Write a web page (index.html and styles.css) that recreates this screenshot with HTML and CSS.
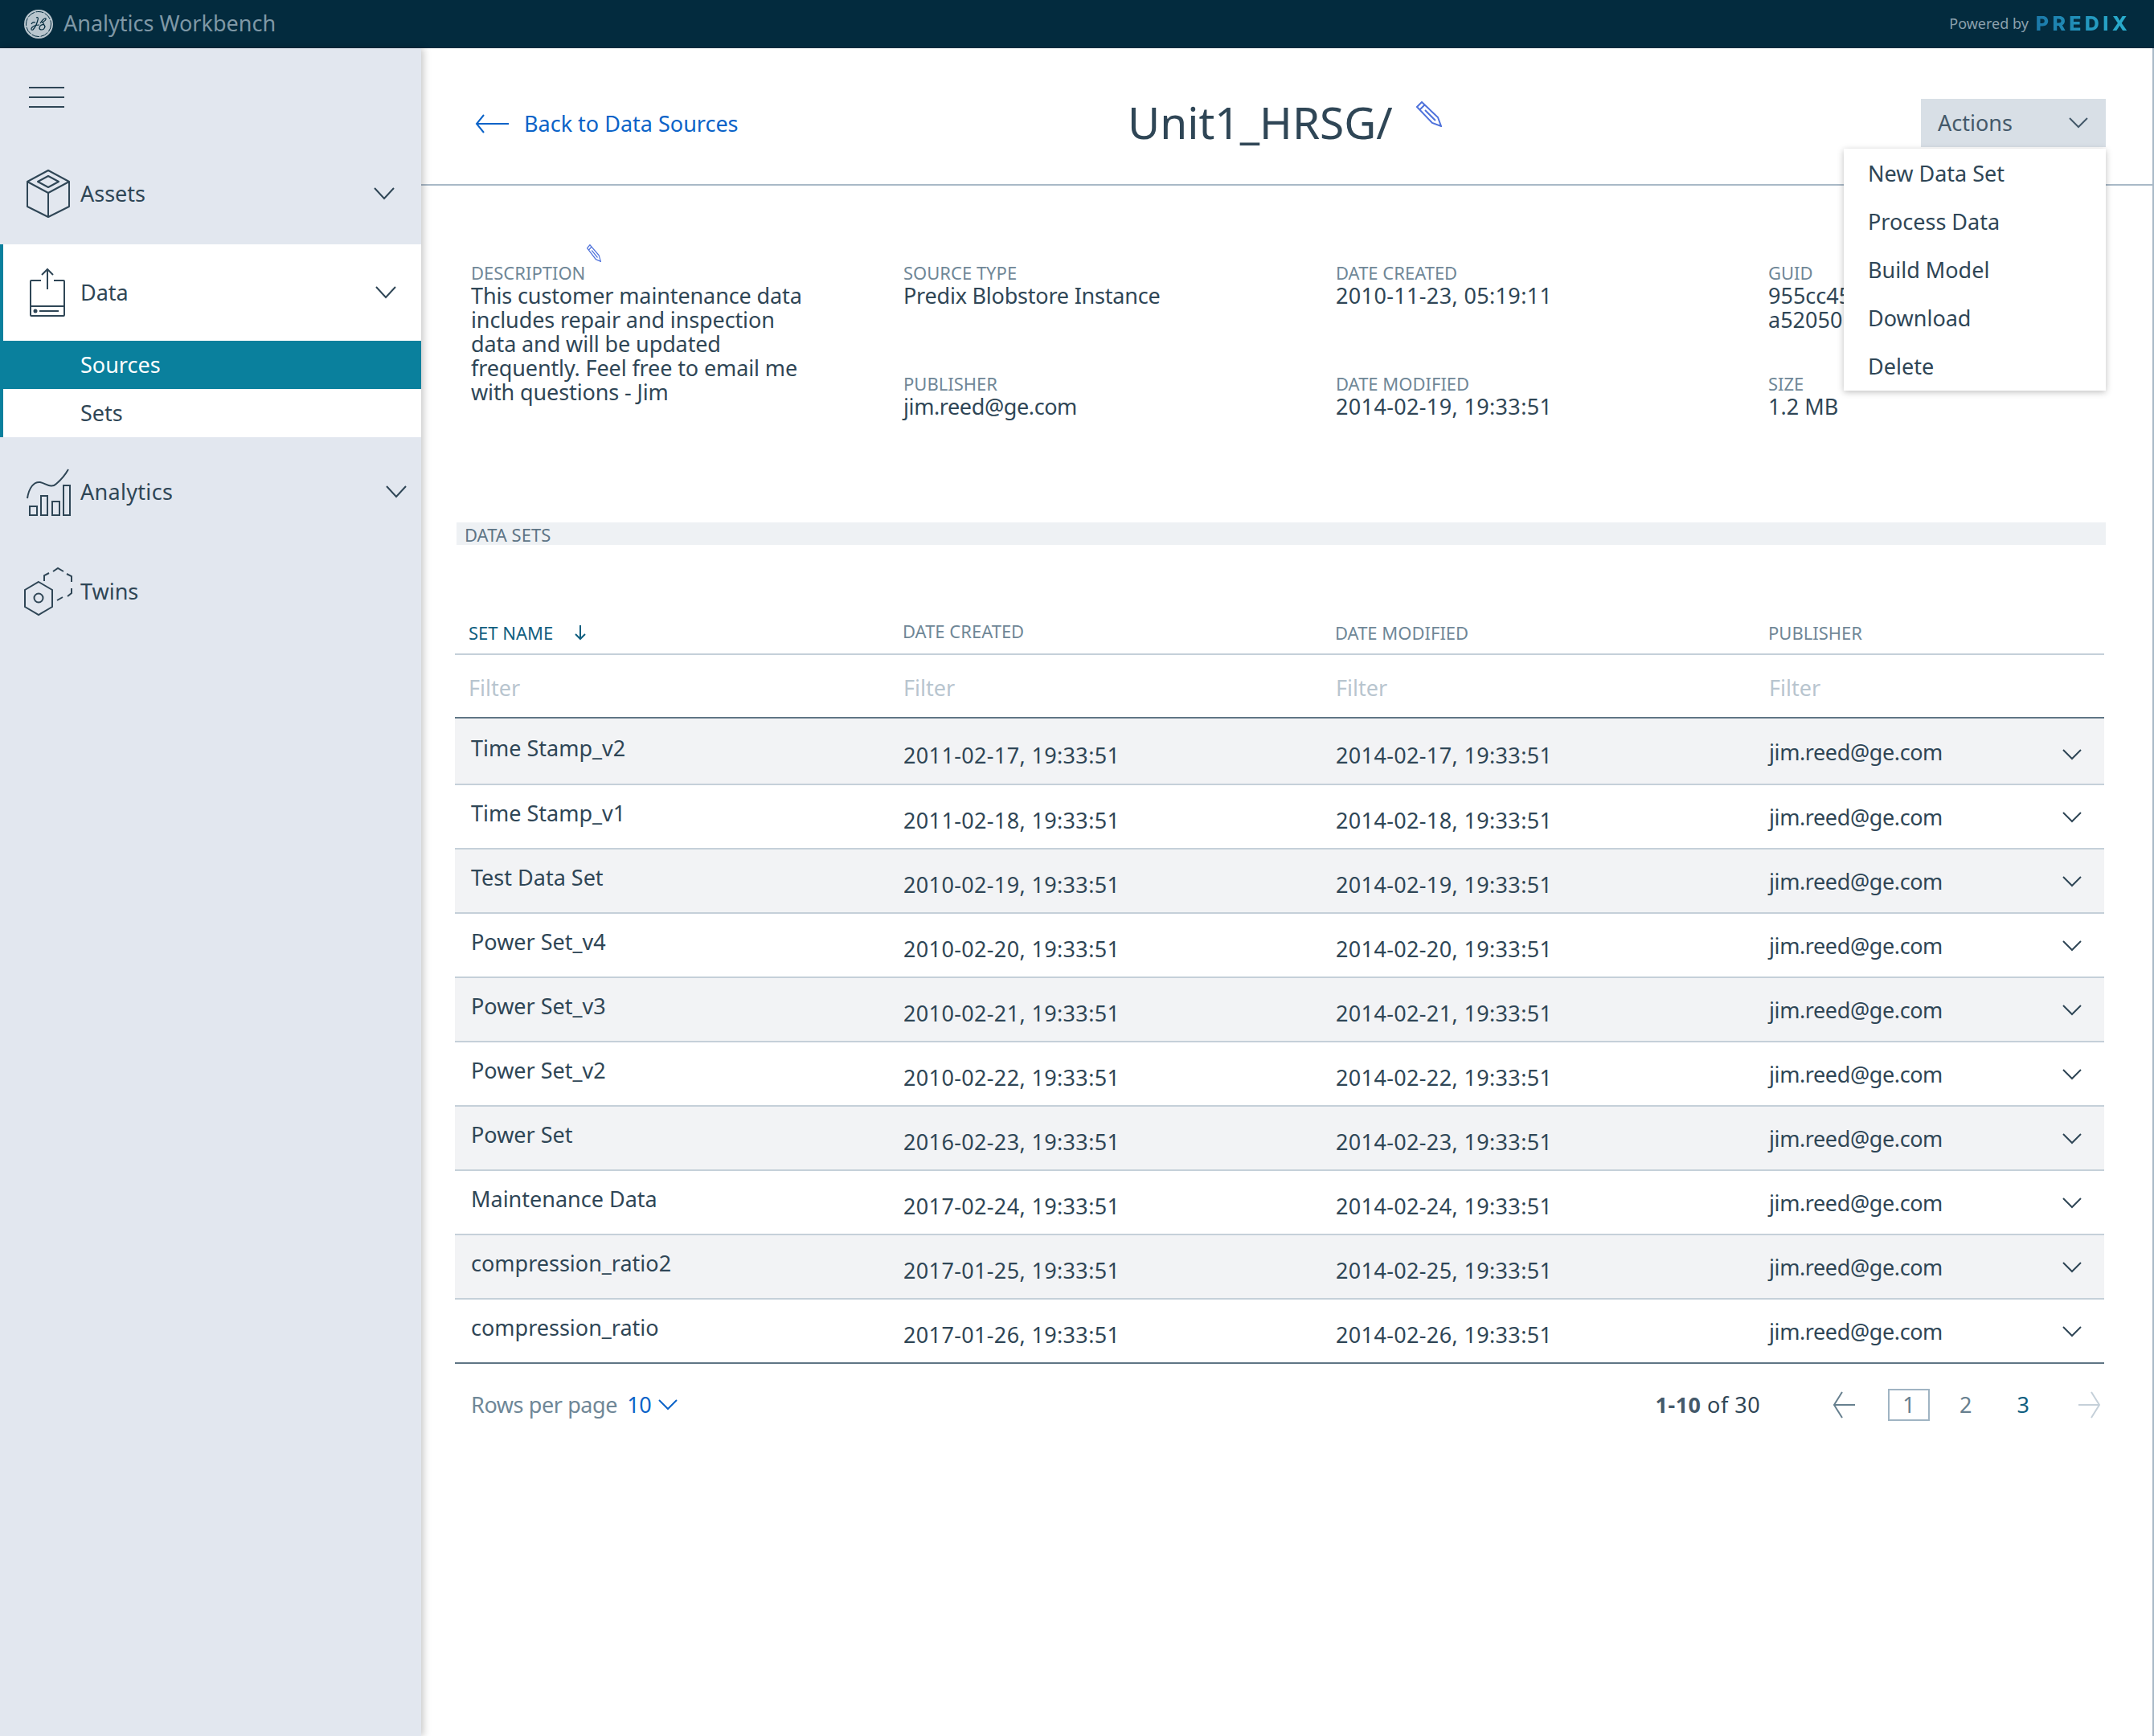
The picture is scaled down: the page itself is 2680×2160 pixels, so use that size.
FILE: index.html
```html
<!DOCTYPE html>
<html lang="en">
<head>
    <meta charset="UTF-8">
    <meta name="viewport" content="width=device-width, initial-scale=1.0">
    <title>Analytics Workbench</title>
    <link rel="stylesheet" href="styles.css">
</head>
<body>
    <header class="topbar">
        <div class="brand">
            <svg class="ge-logo" width="36" height="36" viewBox="0 0 36 36">
                <circle cx="18" cy="18" r="18" fill="#b9c6ce"/>
                <circle cx="18" cy="18" r="15.5" fill="none" stroke="#032b3e" stroke-width="1" stroke-dasharray="10 1.500"/>
                <path d="M15 10c2-1 3 0 2 3-1 4-3 9-6 12-2 1-3-1-1-3 2-2 6-3 9-3M9 18c1-2 3-3 5-2M20 17c2-3 5-7 7-6 1 2-3 4-5 5 2 0 3 1 2 3M19 23c0-3 3-5 6-4 2 2 0 6-3 6-2 0-3-1-3-2" fill="none" stroke="#032b3e" stroke-width="1.200"/>
            </svg>
            <span class="brand-name">Analytics Workbench</span>
        </div>
        <div class="powered">
            <span class="powered-by">Powered by</span>
            <span class="predix">PREDIX</span>
        </div>
    </header>

    <div class="app">
        <nav class="sidebar">
            <div class="burger"><span></span><span></span><span></span></div>

            <a class="nav-item nav-assets">
                <svg class="nav-icon" width="54" height="62" viewBox="0 0 54 62">
                    <path d="M27 2 53 16V47L27 60 1 47V16ZM1 16 27 30 53 16M27 30V60M27 9 40 16 27 23 14 16Z" fill="none" stroke="#2f4656" stroke-width="2" stroke-linejoin="round"/>
                </svg>
                <span class="nav-label">Assets</span>
                <svg class="chev" width="26" height="16" viewBox="0 0 26 16"><path d="M1 1 13 14 25 1" fill="none" stroke="#2f4656" stroke-width="2"/></svg>
            </a>

            <div class="nav-group">
                <a class="nav-item nav-data">
                    <svg class="nav-icon" width="54" height="62" viewBox="0 0 54 62">
                        <path d="M20 16H8Q7 16 7 17V59Q7 60 8 60H48Q49 60 49 59V17Q49 16 48 16H36M7 48H49M28 27V2M21 9 28 2 35 9M18 54H42" fill="none" stroke="#2f4656" stroke-width="2"/>
                        <circle cx="13" cy="54" r="2.500" fill="#2f4656"/>
                    </svg>
                    <span class="nav-label">Data</span>
                    <svg class="chev" width="26" height="16" viewBox="0 0 26 16"><path d="M1 1 13 14 25 1" fill="none" stroke="#2f4656" stroke-width="2"/></svg>
                </a>
                <a class="sub-item active">Sources</a>
                <a class="sub-item">Sets</a>
            </div>

            <a class="nav-item nav-analytics">
                <svg class="nav-icon" width="56" height="62" viewBox="0 0 56 62">
                    <path d="M2 39C4 26 10 18 18 19 26 21 32 27 38 21 44 16 49 10 53 3M5 49H14V60H5ZM19 36H27V60H19ZM33 43H42V60H33ZM47 23H55V60H47Z" fill="none" stroke="#2f4656" stroke-width="2"/>
                </svg>
                <span class="nav-label">Analytics</span>
                <svg class="chev" width="26" height="16" viewBox="0 0 26 16"><path d="M1 1 13 14 25 1" fill="none" stroke="#2f4656" stroke-width="2"/></svg>
            </a>

            <a class="nav-item nav-twins">
                <svg class="nav-icon" width="60" height="62" viewBox="0 0 60 62">
                    <path d="M18 19 35 29V50L18 60 1 50V29Z" fill="none" stroke="#2f4656" stroke-width="2"/>
                    <circle cx="18" cy="39" r="5.500" fill="none" stroke="#2f4656" stroke-width="2"/>
                    <path d="M25 18V11L31 8M36 6 42 2 49 6M53 9 59 12V19M59 27V33L54 37M48 38 41 42" fill="none" stroke="#2f4656" stroke-width="2"/>
                </svg>
                <span class="nav-label">Twins</span>
            </a>
        </nav>

        <main class="content">
            <div class="page-head">
                <a class="back">
                    <svg width="42" height="24" viewBox="0 0 42 24"><path d="M11 1 2 12 11 23M2 12H42" fill="none" stroke="#0b63c8" stroke-width="2"/></svg>
                    <span>Back to Data Sources</span>
                </a>
                <div class="title-wrap">
                    <h1>Unit1_HRSG/</h1>
                    <svg class="pencil" width="32" height="32" viewBox="0 0 32 32"><path d="M1 7 7 1 27 20 31 31 20 27ZM4 11 11 4M11 11 24 24" fill="none" stroke="#4f72db" stroke-width="2"/></svg>
                </div>
                <div class="actions">
                    <div class="actions-btn">
                        <span>Actions</span>
                        <svg width="24" height="14" viewBox="0 0 24 14"><path d="M1 1 12 12 23 1" fill="none" stroke="#44596a" stroke-width="2"/></svg>
                    </div>
                    <ul class="menu">
                        <li>New Data Set</li>
                        <li>Process Data</li>
                        <li>Build Model</li>
                        <li>Download</li>
                        <li>Delete</li>
                    </ul>
                </div>
            </div>

            <section class="info">
                <div class="info-desc">
                    <svg class="pencil-sm" width="18" height="22" viewBox="0 0 32 32" preserveAspectRatio="none"><path d="M1 7 7 1 27 20 31 31 20 27ZM4 11 11 4M11 11 24 24" fill="none" stroke="#4f72db" stroke-width="2"/></svg>
                    <div class="label">DESCRIPTION</div>
                    <div class="value">This customer maintenance data includes repair and inspection data and will be updated frequently. Feel free to email me with questions - Jim</div>
                </div>
                <div class="info-col">
                    <div class="info-cell">
                        <div class="label">SOURCE TYPE</div>
                        <div class="value tight">Predix Blobstore Instance</div>
                    </div>
                    <div class="info-cell">
                        <div class="label">PUBLISHER</div>
                        <div class="value mail">jim.reed@ge.com</div>
                    </div>
                </div>
                <div class="info-col">
                    <div class="info-cell">
                        <div class="label">DATE CREATED</div>
                        <div class="value num">2010-11-23, 05:19:11</div>
                    </div>
                    <div class="info-cell">
                        <div class="label">DATE MODIFIED</div>
                        <div class="value num">2014-02-19, 19:33:51</div>
                    </div>
                </div>
                <div class="info-col">
                    <div class="info-cell">
                        <div class="label">GUID</div>
                        <div class="value guid">955cc45 a52050</div>
                    </div>
                    <div class="info-cell">
                        <div class="label">SIZE</div>
                        <div class="value">1.2 MB</div>
                    </div>
                </div>
            </section>

            <div class="section-bar">DATA SETS</div>

            <div class="table">
                <div class="thead">
                    <div class="th th-sort">SET NAME
                        <svg width="20" height="20" viewBox="0 0 20 20"><path d="M10 1V18M4 12 10 18 16 12" fill="none" stroke="#0f5e7f" stroke-width="2"/></svg>
                    </div>
                    <div class="th th-created">DATE CREATED</div>
                    <div class="th">DATE MODIFIED</div>
                    <div class="th">PUBLISHER</div>
                </div>
                <div class="tfilter">
                    <div>Filter</div>
                    <div>Filter</div>
                    <div>Filter</div>
                    <div>Filter</div>
                </div>
                <div class="rows">
                    <div class="row">
                        <div class="cell-name">Time Stamp_v2</div>
                        <div class="cell-date">2011-02-17, 19:33:51</div>
                        <div class="cell-date">2014-02-17, 19:33:51</div>
                        <div class="cell-pub">jim.reed@ge.com</div>
                        <div class="cell-chev"><svg width="24" height="14" viewBox="0 0 24 14"><path d="M1 1 12 12 23 1" fill="none" stroke="#2f4656" stroke-width="2"/></svg></div>
                    </div>
                    <div class="row">
                        <div class="cell-name">Time Stamp_v1</div>
                        <div class="cell-date">2011-02-18, 19:33:51</div>
                        <div class="cell-date">2014-02-18, 19:33:51</div>
                        <div class="cell-pub">jim.reed@ge.com</div>
                        <div class="cell-chev"><svg width="24" height="14" viewBox="0 0 24 14"><path d="M1 1 12 12 23 1" fill="none" stroke="#2f4656" stroke-width="2"/></svg></div>
                    </div>
                    <div class="row">
                        <div class="cell-name">Test Data Set</div>
                        <div class="cell-date">2010-02-19, 19:33:51</div>
                        <div class="cell-date">2014-02-19, 19:33:51</div>
                        <div class="cell-pub">jim.reed@ge.com</div>
                        <div class="cell-chev"><svg width="24" height="14" viewBox="0 0 24 14"><path d="M1 1 12 12 23 1" fill="none" stroke="#2f4656" stroke-width="2"/></svg></div>
                    </div>
                    <div class="row">
                        <div class="cell-name">Power Set_v4</div>
                        <div class="cell-date">2010-02-20, 19:33:51</div>
                        <div class="cell-date">2014-02-20, 19:33:51</div>
                        <div class="cell-pub">jim.reed@ge.com</div>
                        <div class="cell-chev"><svg width="24" height="14" viewBox="0 0 24 14"><path d="M1 1 12 12 23 1" fill="none" stroke="#2f4656" stroke-width="2"/></svg></div>
                    </div>
                    <div class="row">
                        <div class="cell-name">Power Set_v3</div>
                        <div class="cell-date">2010-02-21, 19:33:51</div>
                        <div class="cell-date">2014-02-21, 19:33:51</div>
                        <div class="cell-pub">jim.reed@ge.com</div>
                        <div class="cell-chev"><svg width="24" height="14" viewBox="0 0 24 14"><path d="M1 1 12 12 23 1" fill="none" stroke="#2f4656" stroke-width="2"/></svg></div>
                    </div>
                    <div class="row">
                        <div class="cell-name">Power Set_v2</div>
                        <div class="cell-date">2010-02-22, 19:33:51</div>
                        <div class="cell-date">2014-02-22, 19:33:51</div>
                        <div class="cell-pub">jim.reed@ge.com</div>
                        <div class="cell-chev"><svg width="24" height="14" viewBox="0 0 24 14"><path d="M1 1 12 12 23 1" fill="none" stroke="#2f4656" stroke-width="2"/></svg></div>
                    </div>
                    <div class="row">
                        <div class="cell-name">Power Set</div>
                        <div class="cell-date">2016-02-23, 19:33:51</div>
                        <div class="cell-date">2014-02-23, 19:33:51</div>
                        <div class="cell-pub">jim.reed@ge.com</div>
                        <div class="cell-chev"><svg width="24" height="14" viewBox="0 0 24 14"><path d="M1 1 12 12 23 1" fill="none" stroke="#2f4656" stroke-width="2"/></svg></div>
                    </div>
                    <div class="row">
                        <div class="cell-name">Maintenance Data</div>
                        <div class="cell-date">2017-02-24, 19:33:51</div>
                        <div class="cell-date">2014-02-24, 19:33:51</div>
                        <div class="cell-pub">jim.reed@ge.com</div>
                        <div class="cell-chev"><svg width="24" height="14" viewBox="0 0 24 14"><path d="M1 1 12 12 23 1" fill="none" stroke="#2f4656" stroke-width="2"/></svg></div>
                    </div>
                    <div class="row">
                        <div class="cell-name">compression_ratio2</div>
                        <div class="cell-date">2017-01-25, 19:33:51</div>
                        <div class="cell-date">2014-02-25, 19:33:51</div>
                        <div class="cell-pub">jim.reed@ge.com</div>
                        <div class="cell-chev"><svg width="24" height="14" viewBox="0 0 24 14"><path d="M1 1 12 12 23 1" fill="none" stroke="#2f4656" stroke-width="2"/></svg></div>
                    </div>
                    <div class="row">
                        <div class="cell-name">compression_ratio</div>
                        <div class="cell-date">2017-01-26, 19:33:51</div>
                        <div class="cell-date">2014-02-26, 19:33:51</div>
                        <div class="cell-pub">jim.reed@ge.com</div>
                        <div class="cell-chev"><svg width="24" height="14" viewBox="0 0 24 14"><path d="M1 1 12 12 23 1" fill="none" stroke="#2f4656" stroke-width="2"/></svg></div>
                    </div>
                </div>
            </div>

            <div class="pager">
                <div class="rows-per">
                    <span>Rows per page</span>
                    <span class="rows-num">10</span>
                    <svg width="24" height="14" viewBox="0 0 24 14"><path d="M1 1 12 12 23 1" fill="none" stroke="#0b63c8" stroke-width="2"/></svg>
                </div>
                <div class="pages">
                    <span class="range"><b>1-10</b> of 30</span>
                    <svg class="arrow-prev" width="28" height="34" viewBox="0 0 28 34"><path d="M12 1 2 17 12 33M2 17H28" fill="none" stroke="#67808f" stroke-width="2"/></svg>
                    <span class="page-cur">1</span>
                    <span class="page-two">2</span>
                    <span class="page-three">3</span>
                    <svg class="arrow-next" width="28" height="34" viewBox="0 0 28 34"><path d="M16 1 26 17 16 33M0 17H26" fill="none" stroke="#c5d0d9" stroke-width="2"/></svg>
                </div>
            </div>
        </main>
    </div>
</body>
</html>
```

FILE: styles.css
```css
* {
    box-sizing: border-box;
}
html, body {
    margin: 0;
    padding: 0;
}
body {
    font-family: "Noto Sans", "Open Sans", sans-serif;
    font-size: 27px;
    line-height: 30px;
    color: #2f4656;
    background-color: #fff;
    width: 2680px;
    height: 2160px;
    overflow: hidden;
}
ul {
    margin: 0;
    padding: 0;
    list-style: none;
}

/* top bar */
.topbar {
    height: 60px;
    background-color: #032b3e;
    display: flex;
    align-items: center;
    justify-content: space-between;
    padding: 0 29px 0 30px;
}
.brand {
    display: flex;
    align-items: center;
    gap: 13px;
}
.brand-name {
    color: #7f98a6;
    font-size: 27px;
    margin-bottom: 2px;
}
.powered {
    display: flex;
    align-items: center;
    gap: 9px;
    margin-bottom: 2px;
}
.powered-by {
    color: #8ba0ad;
    font-size: 18px;
}
.predix {
    font-family: Inter, sans-serif;
    font-weight: 800;
    font-size: 25px;
    letter-spacing: 4.3px;
    background: linear-gradient(90deg, #1b78a8, #2ab0cf);
    -webkit-background-clip: text;
    background-clip: text;
    color: transparent;
}

.app {
    display: flex;
    height: 2100px;
}

/* sidebar */
.sidebar {
    width: 524px;
    flex-shrink: 0;
    background-color: #e2e7ef;
    box-shadow: 3px 0 9px rgba(0,0,0,0.22);
    position: relative;
    z-index: 2;
}
.burger {
    height: 118px;
    padding: 48px 0 0 36px;
}
.burger span {
    display: block;
    width: 44px;
    height: 2px;
    background-color: #2f4656;
    margin-bottom: 10px;
}
.nav-item {
    display: flex;
    align-items: center;
}
.nav-icon {
    flex-shrink: 0;
}
.nav-label {
    flex: 1;
}
.nav-assets {
    height: 126px;
    padding: 0 33px 0 33px;
    gap: 13px;
}
.nav-group {
    background-color: #fff;
    border-left: 4px solid #0a809d;
}
.nav-data {
    height: 120px;
    padding: 0 31px 0 27px;
    gap: 15px;
}
.sub-item {
    display: block;
    height: 60px;
    line-height: 60px;
    padding-left: 96px;
}
.sub-item.active {
    background-color: #0a809d;
    color: #fff;
}
.nav-analytics {
    height: 136px;
    padding: 0 18px 0 32px;
    gap: 12px;
}
.nav-analytics .nav-label {
    letter-spacing: 0.3px;
}
.nav-twins {
    height: 112px;
    padding: 0 0 0 30px;
    gap: 10px;
}

/* main */
.content {
    flex: 1;
    min-width: 0;
    position: relative;
    border-right: 2px solid #a9b9c7;
}
.page-head {
    height: 171px;
    border-bottom: 2px solid #a9b9c7;
    display: flex;
    align-items: flex-start;
    padding: 62px 60px 0 67px;
    margin-right: -2px;
}
.back {
    display: flex;
    align-items: center;
    gap: 19px;
    color: #0b63c8;
    width: 812px;
    height: 60px;
    margin-top: 2px;
}
.title-wrap {
    display: flex;
    align-items: flex-start;
    gap: 29px;
    flex: 1;
}
h1 {
    margin: 0;
    font-weight: 400;
    font-size: 55px;
    line-height: 60px;
}
.pencil {
    margin-top: 4px;
}
.actions {
    position: relative;
    width: 230px;
    margin-top: 1px;
}
.actions-btn {
    height: 60px;
    background-color: #d8dfe6;
    color: #44596a;
    display: flex;
    align-items: center;
    justify-content: space-between;
    padding: 0 22px 0 21px;
}
.menu {
    position: absolute;
    top: 62px;
    right: 0;
    width: 326px;
    padding-top: 1px;
    background-color: #fff;
    box-shadow: 0 2px 8px rgba(0,0,0,0.25);
    z-index: 5;
}
.menu li {
    height: 60px;
    line-height: 60px;
    padding-left: 30px;
}

/* info block */
.info {
    display: flex;
    padding: 0 0 0 62px;
    height: 419px;
}
.info-desc {
    width: 538px;
    padding-top: 96px;
    position: relative;
}
.info-desc .value {
    width: 440px;
    letter-spacing: -0.12px;
}
.pencil-sm {
    position: absolute;
    left: 144px;
    top: 73px;
}
.info-col {
    width: 538px;
    padding-top: 96px;
}
.info-col:last-child {
    width: auto;
}
.info-cell {
    height: 138px;
}
.label {
    font-size: 22px;
    line-height: 24px;
    color: #6f8797;
}
.value {
    line-height: 30px;
    margin-top: 2px;
}
.tight {
    letter-spacing: -0.22px;
}
.mail {
    letter-spacing: -0.4px;
}
.num {
    letter-spacing: 0.35px;
}
.guid {
    width: 125px;
}

/* table */
.section-bar {
    margin: 0 58px 0 44px;
    height: 28px;
    padding-left: 10px;
    background-color: #eef1f4;
    color: #5e7586;
    font-size: 22px;
    line-height: 30px;
}
.table {
    margin: 0 60px 0 42px;
}
.thead {
    display: grid;
    grid-template-columns: 538px 538px 539px 1fr;
    height: 137px;
    padding-top: 95px;
    border-bottom: 2px solid #c5d0d9;
}
.th {
    font-size: 22px;
    line-height: 28px;
    color: #6f8797;
    padding-left: 19px;
}
.th-sort {
    color: #0f5e7f;
    display: flex;
    align-items: center;
    gap: 24px;
    height: 28px;
    padding-left: 17px;
}
.th-created {
    margin-top: -2px;
}
.tfilter {
    display: grid;
    grid-template-columns: 538px 538px 539px 1fr;
    height: 79px;
    border-bottom: 2px solid #5f7585;
    color: #b8c5cf;
    line-height: 81px;
}
.tfilter div {
    padding-left: 20px;
}
.tfilter div:first-child {
    padding-left: 17px;
}
.row {
    display: grid;
    grid-template-columns: 520px 538px 539px 1fr 52px;
    height: 80px;
    border-bottom: 2px solid #c5d0d9;
    padding-left: 20px;
}
.row:first-child {
    height: 83px;
    padding-top: 2px;
}
.row:first-child .cell-chev {
    padding-top: 36px;
}
.row:nth-child(odd) {
    background-color: #f2f3f5;
}
.row:last-child {
    border-bottom-color: #5f7585;
}
.cell-name {
    padding-top: 20px;
}
.cell-date {
    padding-top: 29px;
    padding-left: 18px;
    letter-spacing: 0.35px;
}
.cell-pub {
    padding-top: 25px;
    padding-left: 18px;
    letter-spacing: -0.4px;
}
.cell-chev {
    padding-top: 33px;
}
.cell-chev svg {
    display: block;
}

/* pager */
.pager {
    margin: 20px 60px 0 62px;
    height: 62px;
    display: flex;
    align-items: center;
    justify-content: space-between;
}
.rows-per {
    display: flex;
    align-items: center;
    color: #6f8797;
    letter-spacing: -0.4px;
}
.rows-num {
    color: #0b63c8;
    margin-left: 12px;
}
.rows-per svg {
    margin-left: 9px;
}
.pages {
    display: flex;
    align-items: center;
    padding-right: 4px;
}
.range {
    color: #2f4656;
    margin-right: 90px;
    letter-spacing: 0.5px;
}
.range b {
    color: #44596a;
}
.page-cur {
    width: 52px;
    height: 40px;
    line-height: 36px;
    text-align: center;
    border: 2px solid #a0b4c3;
    color: #67808f;
    margin-left: 41px;
    margin-right: 37px;
}
.page-two {
    color: #67808f;
    margin-right: 56px;
}
.page-three {
    color: #0f5e7f;
    margin-right: 61px;
}
```
